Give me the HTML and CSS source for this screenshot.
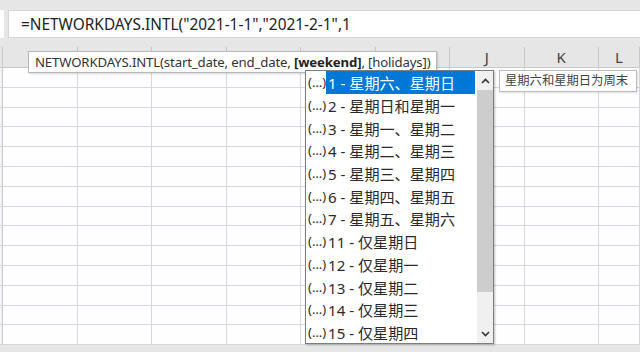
FILE: index.html
```html
<!DOCTYPE html>
<html lang="zh-CN">
<head>
<meta charset="UTF-8">
<title>NETWORKDAYS.INTL</title>
<link rel="stylesheet" href="styles.css">
</head>
<body>
<div class="topbar"></div>
<div class="formula-row">
    <div class="name-box"></div>
    <div class="formula-input">=NETWORKDAYS.INTL("2021-1-1","2021-2-1",1</div>
</div>
<div class="band"></div>
<div class="sheet" id="sheet"></div>

<div class="tooltip">NETWORKDAYS.INTL(start_date, end_date, <b>[weekend]</b>, [holidays])</div>

<div class="dropdown">
    <ul class="list">
        <li class="item active"><span class="more">(…)</span><span class="label">1 - 星期六、星期日</span></li>
        <li class="item"><span class="more">(…)</span><span class="label">2 - 星期日和星期一</span></li>
        <li class="item"><span class="more">(…)</span><span class="label">3 - 星期一、星期二</span></li>
        <li class="item"><span class="more">(…)</span><span class="label">4 - 星期二、星期三</span></li>
        <li class="item"><span class="more">(…)</span><span class="label">5 - 星期三、星期四</span></li>
        <li class="item"><span class="more">(…)</span><span class="label">6 - 星期四、星期五</span></li>
        <li class="item"><span class="more">(…)</span><span class="label">7 - 星期五、星期六</span></li>
        <li class="item"><span class="more">(…)</span><span class="label">11 - 仅星期日</span></li>
        <li class="item"><span class="more">(…)</span><span class="label">12 - 仅星期一</span></li>
        <li class="item"><span class="more">(…)</span><span class="label">13 - 仅星期二</span></li>
        <li class="item"><span class="more">(…)</span><span class="label">14 - 仅星期三</span></li>
        <li class="item"><span class="more">(…)</span><span class="label">15 - 仅星期四</span></li>
    </ul>
    <div class="scrollbar">
        <div class="arrow"><svg width="9" height="6" viewBox="0 0 9 6"><path d="M1 5 L4.5 1.5 L8 5" fill="none" stroke="#333" stroke-width="1.6"/></svg></div>
        <div class="thumb"></div>
        <div class="track"></div>
        <div class="arrow"><svg width="9" height="6" viewBox="0 0 9 6"><path d="M1 1 L4.5 4.5 L8 1" fill="none" stroke="#333" stroke-width="1.6"/></svg></div>
    </div>
</div>

<div class="side-tip">星期六和星期日为周末</div>

<script>
// headers D..I sit under the tooltip, so only J, K, L are written out
var cols = ["", "", "", "", "", "", "", "J", "K", "L"];
var sheet = document.getElementById("sheet");
var i, r, cell;

for (i = 0; i < cols.length; i++) {
    cell = document.createElement("div");
    cell.className = "head";
    cell.textContent = cols[i];
    sheet.appendChild(cell);
}

// 14 visible rows
for (r = 0; r < 14; r++) {
    for (i = 0; i < cols.length; i++) {
        cell = document.createElement("div");
        cell.className = i === 0 ? "cell row-head" : "cell";
        sheet.appendChild(cell);
    }
}
</script>
</body>
</html>
```

FILE: styles.css
```css
body {
    margin: 0;
    width: 640px;
    height: 352px;
    overflow: hidden;
    position: relative;
    background-color: #e6e6e6;
    font-family: "Noto Sans", "Noto Sans CJK SC", sans-serif;
    color: #333;
}

.topbar {
    height: 10px;
}

.formula-row {
    display: flex;
    gap: 4px;
    height: 28px;
}

.name-box {
    width: 4px;
    background-color: #fff;
}

.formula-input {
    flex: 1;
    display: flex;
    align-items: center;
    padding-left: 12px;
    background-color: #fff;
    border: 1px solid #d6d6d6;
    border-right: none;
    font-size: 15.4px;
    color: #222;
    white-space: nowrap;
}

.band {
    height: 9px;
}

.sheet {
    display: grid;
    grid-template-columns: 3px repeat(8, 74.5px) 1fr;
    grid-template-rows: 21px;
    grid-auto-rows: 19.8px;
    background-color: #fefdff;
}

.head {
    background-color: #e6e6e6;
    border-right: 1px solid #c8c8c8;
    border-bottom: 1px solid #c8c8c8;
    text-align: center;
    font-size: 15px;
    line-height: 21px;
    color: #444;
}

.cell {
    border-right: 1px solid #d8d8d8;
    border-bottom: 1px solid #d8d8d8;
}

.cell.row-head {
    background-color: #f4f4f4;
    border-right-color: #c8c8c8;
}

.tooltip {
    position: absolute;
    left: 28px;
    top: 51px;
    width: 409px;
    height: 22px;
    box-sizing: border-box;
    padding-left: 6px;
    background-color: #fff;
    border: 1px solid #b8b8b8;
    box-shadow: 1px 1px 2px rgba(0, 0, 0, 0.15);
    font-size: 13.2px;
    letter-spacing: -0.15px;
    line-height: 20px;
    color: #333;
    white-space: nowrap;
}

.tooltip b {
    font-weight: bold;
    color: #222;
}

.dropdown {
    position: absolute;
    left: 305px;
    top: 70px;
    width: 189px;
    height: 274px;
    box-sizing: border-box;
    display: flex;
    background-color: #fff;
    border: 1px solid #7e7e7e;
    box-shadow: 1px 1px 2px rgba(0, 0, 0, 0.25);
}

.list {
    flex: 1;
    margin: 0;
    padding: 0;
    list-style: none;
}

.item {
    display: flex;
    align-items: center;
    height: 22.7px;
    font-size: 15.1px;
    color: #2a2a2a;
    white-space: nowrap;
}

.item .more {
    width: 18px;
    padding-left: 2px;
    font-size: 13px;
}

.item .label {
    flex: 1;
    display: flex;
    align-items: center;
    height: 100%;
    padding-left: 2px;
    margin-right: 2px;
}

.item.active .label {
    background-color: #0078d7;
    color: #fff;
}

.scrollbar {
    width: 16px;
    display: flex;
    flex-direction: column;
    background-color: #f0f0f0;
}

.scrollbar .arrow {
    height: 19px;
    display: flex;
    align-items: center;
    justify-content: center;
}

.scrollbar .thumb {
    height: 202px;
    background-color: #cdcdcd;
}

.scrollbar .track {
    flex: 1;
}

.side-tip {
    position: absolute;
    left: 499px;
    top: 70px;
    width: 138px;
    height: 22px;
    box-sizing: border-box;
    padding-left: 5px;
    background-color: #fff;
    border: 1px solid #bcbcbc;
    box-shadow: 1px 1px 2px rgba(0, 0, 0, 0.12);
    font-size: 12.3px;
    line-height: 20px;
    color: #444;
    white-space: nowrap;
}
```
